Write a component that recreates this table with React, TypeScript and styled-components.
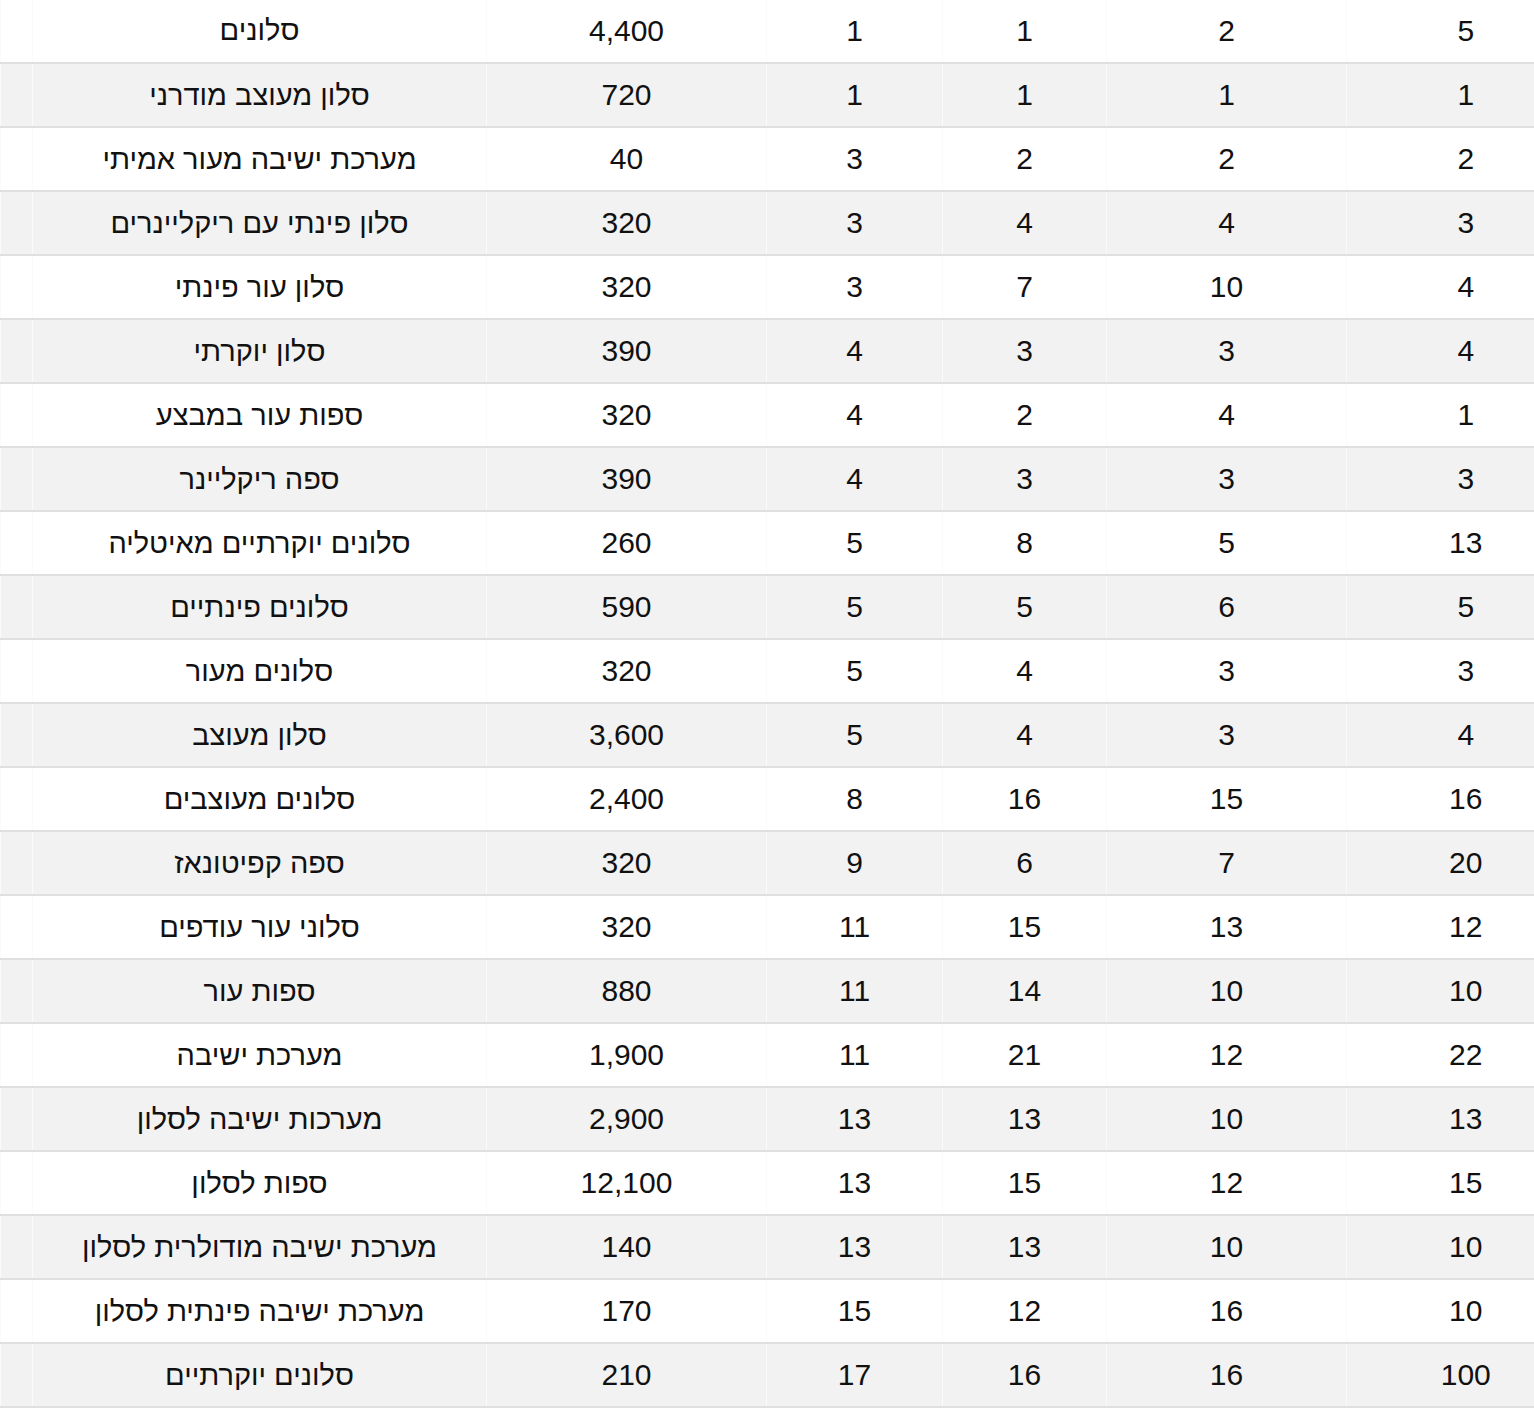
import React from "react";
import styled, { createGlobalStyle } from "styled-components";

const GlobalStyle = createGlobalStyle`
  html, body {
    margin: 0;
    padding: 0;
    background: #ffffff;
    overflow: hidden;
  }
  body {
    font-family: "Liberation Sans", Arial, "DejaVu Sans", sans-serif;
  }
`;

const Table = styled.table`
  width: 1584px;
  margin-top: -1px;
  border-collapse: collapse;
  table-layout: fixed;
  font-family: "Liberation Sans", Arial, "DejaVu Sans", sans-serif;
  font-size: 30px;
  color: #111111;
`;

const Row = styled.tr<{ $shaded: boolean }>`
  height: 64px;
  background: ${(p) => (p.$shaded ? "#f2f2f2" : "#ffffff")};
  border-bottom: 2px solid #e0e0e0;
`;

const Cell = styled.td`
  height: 62px;
  padding: 0;
  text-align: center;
  vertical-align: middle;
  white-space: nowrap;
  border-left: 1px solid #fafafa;
`;

const NameCell = styled(Cell)`
  direction: rtl;
  font-size: 29px;
`;

const widths = [32, 454, 280, 176, 164, 240, 238];

const rows: [string, string, string, string, string, string][] = [
  ["סלונים", "4,400", "1", "1", "2", "5"],
  ["סלון מעוצב מודרני", "720", "1", "1", "1", "1"],
  ["מערכת ישיבה מעור אמיתי", "40", "3", "2", "2", "2"],
  ["סלון פינתי עם ריקליינרים", "320", "3", "4", "4", "3"],
  ["סלון עור פינתי", "320", "3", "7", "10", "4"],
  ["סלון יוקרתי", "390", "4", "3", "3", "4"],
  ["ספות עור במבצע", "320", "4", "2", "4", "1"],
  ["ספה ריקליינר", "390", "4", "3", "3", "3"],
  ["סלונים יוקרתיים מאיטליה", "260", "5", "8", "5", "13"],
  ["סלונים פינתיים", "590", "5", "5", "6", "5"],
  ["סלונים מעור", "320", "5", "4", "3", "3"],
  ["סלון מעוצב", "3,600", "5", "4", "3", "4"],
  ["סלונים מעוצבים", "2,400", "8", "16", "15", "16"],
  ["ספה קפיטונאז", "320", "9", "6", "7", "20"],
  ["סלוני עור עודפים", "320", "11", "15", "13", "12"],
  ["ספות עור", "880", "11", "14", "10", "10"],
  ["מערכת ישיבה", "1,900", "11", "21", "12", "22"],
  ["מערכות ישיבה לסלון", "2,900", "13", "13", "10", "13"],
  ["ספות לסלון", "12,100", "13", "15", "12", "15"],
  ["מערכת ישיבה מודולרית לסלון", "140", "13", "13", "10", "10"],
  ["מערכת ישיבה פינתית לסלון", "170", "15", "12", "16", "10"],
  ["סלונים יוקרתיים", "210", "17", "16", "16", "100"],
];

export default function App() {
  return (
    <>
      <GlobalStyle />
      <Table>
        <colgroup>
          {widths.map((w, i) => (
            <col key={i} style={{ width: w }} />
          ))}
        </colgroup>
        <tbody>
          {rows.map((r, i) => (
            <Row key={i} $shaded={i % 2 === 1}>
              <Cell />
              <NameCell>{r[0]}</NameCell>
              <Cell>{r[1]}</Cell>
              <Cell>{r[2]}</Cell>
              <Cell>{r[3]}</Cell>
              <Cell>{r[4]}</Cell>
              <Cell>{r[5]}</Cell>
            </Row>
          ))}
        </tbody>
      </Table>
    </>
  );
}
